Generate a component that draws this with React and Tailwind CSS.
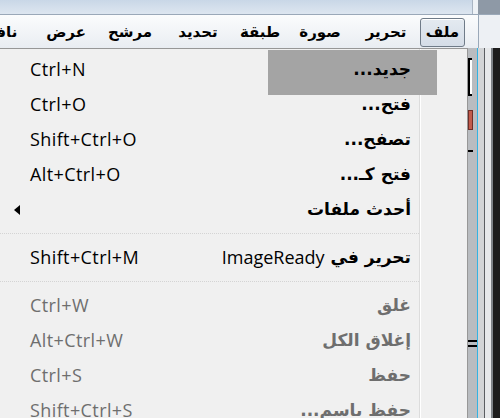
import React from 'react';

const menuBar = [
    { label: 'ملف', w: 'w-[45px]', active: true },
    { label: 'تحرير', w: 'w-[68px]' },
    { label: 'صورة', w: 'w-[64px]' },
    { label: 'طبقة', w: 'w-[56px]' },
    { label: 'تحديد', w: 'w-[68px]' },
    { label: 'مرشح', w: 'w-[68px]' },
    { label: 'عرض', w: 'w-[60px]' },
    { label: 'نافذة', w: 'w-[76px]' },
];

const items = [
    { label: 'جديد...', shortcut: 'Ctrl+N' },
    { label: 'فتح...', shortcut: 'Ctrl+O' },
    { label: 'تصفح...', shortcut: 'Shift+Ctrl+O' },
    { label: 'فتح كـ...', shortcut: 'Alt+Ctrl+O' },
    { label: 'أحدث ملفات', submenu: true },
    { sep: true },
    { label: 'تحرير في', latin: 'ImageReady', shortcut: 'Shift+Ctrl+M' },
    { sep: true },
    { label: 'غلق', shortcut: 'Ctrl+W', disabled: true },
    { label: 'إغلاق الكل', shortcut: 'Alt+Ctrl+W', disabled: true },
    { label: 'حفظ', shortcut: 'Ctrl+S', disabled: true },
    { label: 'حفظ باسم...', shortcut: 'Shift+Ctrl+S', disabled: true },
];

const latinFont = "font-['Open_Sans','Noto_Sans',sans-serif]";
const arabicFont = "font-['DejaVu_Sans',sans-serif]";

const MenuRow = ({ item }) => {
    if (item.sep) {
        return (
            <div className="h-[13px] shrink-0 flex items-center">
                <div className="w-full border-t border-dotted border-[#d4d4d4]"></div>
            </div>
        );
    }
    const tone = item.disabled ? 'text-[#6e6e6e]' : 'text-black';
    return (
        <div className={`h-[35px] shrink-0 flex items-center relative ${tone}`}>
            {item.submenu ? (
                <div className="ml-[14px] w-0 h-0 border-y-[5px] border-y-transparent border-r-[6px] border-r-black"></div>
            ) : (
                <span className={`ml-[30px] text-[18px] tracking-[0.4px] ${latinFont}`}>{item.shortcut}</span>
            )}
            <div className="flex-1"></div>
            <div dir="rtl" className="mr-[8px] flex items-center gap-[6px]">
                <span className={`text-[17px] font-bold ${arabicFont}`}>{item.label}</span>
                {item.latin && <span className={`text-[18px] ${latinFont}`}>{item.latin}</span>}
            </div>
        </div>
    );
};

export default function App() {
    return (
        <div className="w-[500px] h-[418px] overflow-hidden flex flex-col bg-[#dfe7f1]">
            {/* title strip */}
            <div className="h-[14px] shrink-0 flex">
                <div className="flex-1 bg-gradient-to-b from-[#c9d7e7] to-[#dde6f0]"></div>
                <div className="w-[6px] bg-[#eef2f6] border-l border-[#a9b5c3]"></div>
                <div className="w-[22px] bg-[#8e99a6]"></div>
            </div>

            {/* menu bar */}
            <div className="h-[34px] shrink-0 flex">
                <div
                    dir="rtl"
                    className="w-[478px] flex items-stretch pr-[13px] pt-[3px] pb-[1px] border-t border-[#9aa8b8] bg-gradient-to-b from-[#fbfcfd] to-[#e9edf2] overflow-hidden"
                >
                    {menuBar.map((m) => (
                        <div
                            key={m.label}
                            className={`${m.w} shrink-0 flex items-center justify-center text-[15px] font-bold text-black ${arabicFont} ${
                                m.active ? 'rounded-[3px] border border-[#6f7b88] bg-gradient-to-b from-[#e4eaf1] to-[#d5dde7] shadow-[inset_0_1px_0_#ffffff]' : ''
                            }`}
                        >
                            {m.label}
                        </div>
                    ))}
                </div>
                <div className="flex-1 border-l border-t border-[#9aa8b8] bg-[#edf0f4]"></div>
            </div>

            {/* body */}
            <div className="flex-1 min-h-0 overflow-hidden flex">
                {/* dropdown menu */}
                <div className="w-[468px] shrink-0 relative flex bg-[#f0f0f0] border-r border-t border-[#979797]">
                    <div className="absolute left-[268px] top-[1px] w-[169px] h-[45px] bg-[#a4a4a4]"></div>
                    <div className="w-[419px] pt-[3px] flex flex-col relative">
                        {items.map((item, i) => (
                            <MenuRow key={i} item={item} />
                        ))}
                    </div>
                    <div className="flex-1 border-l border-[#dcdcdc] shadow-[inset_1px_0_0_#ffffff]"></div>
                </div>

                {/* window behind */}
                <div className="flex-1 flex">
                    <div className="w-[9px] flex flex-col bg-[#b9bcc0]">
                        <div className="h-[10px] shrink-0"></div>
                        <div className="h-[38px] shrink-0 w-[4px] border-y-2 border-l-2 border-black bg-white"></div>
                        <div className="h-[14px] shrink-0"></div>
                        <div className="h-[20px] shrink-0 w-[5px] bg-[#c25b4b] border border-[#6e2f29]"></div>
                        <div className="h-[20px] shrink-0"></div>
                        <div className="h-[2px] shrink-0 w-[5px] bg-black"></div>
                        <div className="h-[188px] shrink-0"></div>
                        <div className="h-[2px] shrink-0 bg-black"></div>
                        <div className="h-[3px] shrink-0"></div>
                        <div className="h-[2px] shrink-0 bg-black"></div>
                    </div>
                    <div className="w-[1px] bg-[#33b3e3]"></div>
                    <div className="w-[6px] bg-[#d2d4d6]"></div>
                    <div className="w-[1px] bg-[#5a5d61]"></div>
                    <div className="w-[6px] bg-[#e6e8ea]"></div>
                    <div className="w-[2px] bg-[#7e8388]"></div>
                    <div className="flex-1 bg-[#1c1c1c]"></div>
                </div>
            </div>
        </div>
    );
}
